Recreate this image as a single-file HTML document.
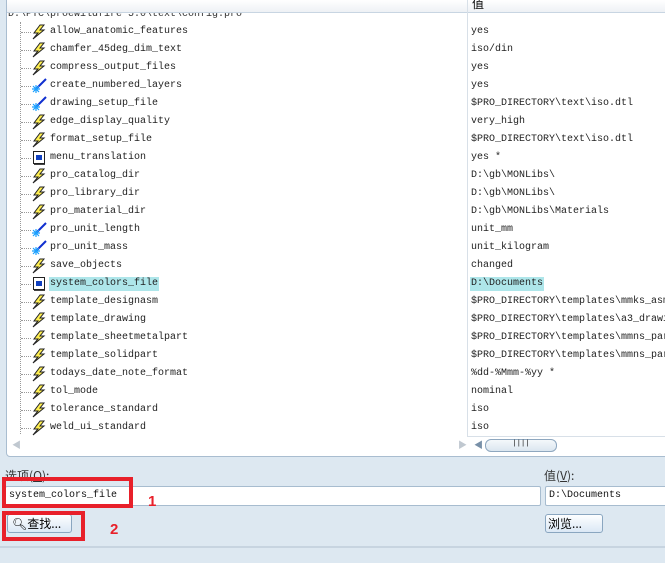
<!DOCTYPE html><html><head><meta charset="utf-8"><style>
html,body{margin:0;width:665px;height:563px;overflow:hidden}
body{background:#dde8f1;font-family:"Liberation Mono","Noto Sans CJK SC",monospace;position:relative}
#wrap{position:absolute;left:0;top:0;width:665px;height:563px;overflow:hidden}
.a{position:absolute}
#panel{left:6px;top:-4px;width:680px;height:459px;background:#fff;border:1px solid #a9bdd0;border-radius:4px}
.hdr{left:7px;top:0;width:658px;height:12px;background:linear-gradient(#fff,#eef1f5);border-bottom:1px solid #c8d5e2}
.r{position:absolute;font-size:10px;color:#222;line-height:14px;white-space:pre}
.dl{position:absolute;left:21px;width:10px;border-top:1px dotted #999}
.box{position:absolute;border:1px solid #a7bccf;background:#fff;border-radius:2px;font-size:10px;line-height:18px;padding-left:3px;color:#111;white-space:pre;overflow:hidden}
.btn{position:absolute;border:1px solid #8aa6c0;border-radius:3px;background:linear-gradient(#fdfeff,#dbe8f5);font-size:12px;line-height:17px;font-family:"Noto Sans CJK SC",sans-serif}
.red{position:absolute;border:4px solid #e8202a}
</style></head><body><div id="wrap">
<div class="a" id="panel"></div>
<div class="r" style="left:8px;top:8px;color:#333">D:\PTC\proewildfire 5.0\text\config.pro</div>
<div class="a hdr"></div>
<div class="a" style="left:467px;top:0;width:1px;height:436px;background:#d8e0e8"></div>
<div class="a" style="left:472px;top:-5px;font-size:12px;font-family:'Noto Sans CJK SC';">值</div>
<div class="a" style="left:20px;top:22px;height:412px;border-left:1px dotted #999"></div>
<div id="rows"></div>
<div class="a" style="left:467px;top:436px;width:198px;height:1px;background:#d8e0e8"></div>
<div class="a" style="left:12px;top:438px;font-size:9px;color:#c0c8d0">◀</div>
<div class="a" style="left:458px;top:438px;font-size:9px;color:#c0c8d0">▶</div>
<div class="a" style="left:474px;top:438px;font-size:9px;color:#7890a8">◀</div>
<div class="a" style="left:485px;top:439px;width:70px;height:11px;border:1px solid #8ea7bf;border-radius:6px;background:linear-gradient(#f4f8fb,#dbe6f0);font-size:7px;text-align:center;line-height:9px">||||</div>
<div class="a" style="left:5px;top:467px;font-size:12px;font-family:'Noto Sans CJK SC';color:#333">选项(<u>O</u>):</div>
<div class="a" style="left:544px;top:467px;font-size:12px;font-family:'Noto Sans CJK SC';color:#333">值(<u>V</u>):</div>
<div class="box" style="left:5px;top:486px;width:531px;height:18px">system_colors_file</div>
<div class="box" style="left:545px;top:486px;width:120px;height:18px">D:\Documents</div>
<div class="btn" style="left:7px;top:514px;width:59px;height:17px;padding-left:4px">🔍︎查找...</div>
<div class="btn" style="left:545px;top:514px;width:54px;height:17px;padding-left:2px">浏览...</div>
<div class="red" style="left:2px;top:477px;width:123px;height:23px"></div>
<div class="red" style="left:2px;top:511px;width:75px;height:22px"></div>
<div class="a" style="left:148px;top:493px;color:#e8202a;font:bold 15px 'Liberation Sans'">1</div>
<div class="a" style="left:110px;top:521px;color:#e8202a;font:bold 15px 'Liberation Sans'">2</div>
<div class="a" style="left:0;top:546px;width:665px;height:2px;background:#c7d4e0"></div>
</div>
<script>
var d=[["allow_anatomic_features","yes",0],["chamfer_45deg_dim_text","iso/din",0],["compress_output_files","yes",0],["create_numbered_layers","yes",1],["drawing_setup_file","$PRO_DIRECTORY\\text\\iso.dtl",1],["edge_display_quality","very_high",0],["format_setup_file","$PRO_DIRECTORY\\text\\iso.dtl",0],["menu_translation","yes *",2],["pro_catalog_dir","D:\\gb\\MONLibs\\",0],["pro_library_dir","D:\\gb\\MONLibs\\",0],["pro_material_dir","D:\\gb\\MONLibs\\Materials",0],["pro_unit_length","unit_mm",1],["pro_unit_mass","unit_kilogram",1],["save_objects","changed",0],["system_colors_file","D:\\Documents",2],["template_designasm","$PRO_DIRECTORY\\templates\\mmks_asm_design.asm",0],["template_drawing","$PRO_DIRECTORY\\templates\\a3_drawing.drw",0],["template_sheetmetalpart","$PRO_DIRECTORY\\templates\\mmns_part_sheetmetal.prt",0],["template_solidpart","$PRO_DIRECTORY\\templates\\mmns_part_solid.prt",0],["todays_date_note_format","%dd-%Mmm-%yy *",0],["tol_mode","nominal",0],["tolerance_standard","iso",0],["weld_ui_standard","iso",0]];
var h="";d.forEach(function(r,i){var y=25+i*18;
h+='<div class="dl" style="top:'+(y+7)+'px"></div>';
var ic=r[2]==0?'<svg width="16" height="16" style="position:absolute;left:31px;top:'+(y-1)+'px"><path d="M9 1 L3 9 L7 9 L2 15 L13 6 L9 6 L13 1Z" fill="#ffef50" stroke="#222" stroke-width="1"/></svg>':
r[2]==1?'<svg width="16" height="16" style="position:absolute;left:31px;top:'+(y-1)+'px"><line x1="5" y1="11" x2="15" y2="1" stroke="#1030d0" stroke-width="2"/><path d="M1 11h8M5 7v8M2 8l6 6M8 8l-6 6" stroke="#1aa0ff" stroke-width="1.2"/></svg>':
'<svg width="16" height="16" style="position:absolute;left:32px;top:'+(y-1)+'px"><rect x="1.5" y="1.5" width="11" height="12" fill="#fff" stroke="#222"/><rect x="4" y="5" width="6" height="5" fill="#1040c0"/><line x1="2" y1="14.5" x2="13" y2="14.5" stroke="#444"/></svg>';
h+=ic;
var hl=i==14?'background:#aee6ea;':'';
h+='<div class="r" style="left:49px;top:'+y+'px;padding:0 1px;'+hl+'">'+r[0]+'</div>';
h+='<div class="r" style="left:470px;top:'+y+'px;padding:0 1px;'+hl+'">'+r[1]+'</div>';});
document.getElementById('rows').innerHTML=h;
</script>
</body></html>
